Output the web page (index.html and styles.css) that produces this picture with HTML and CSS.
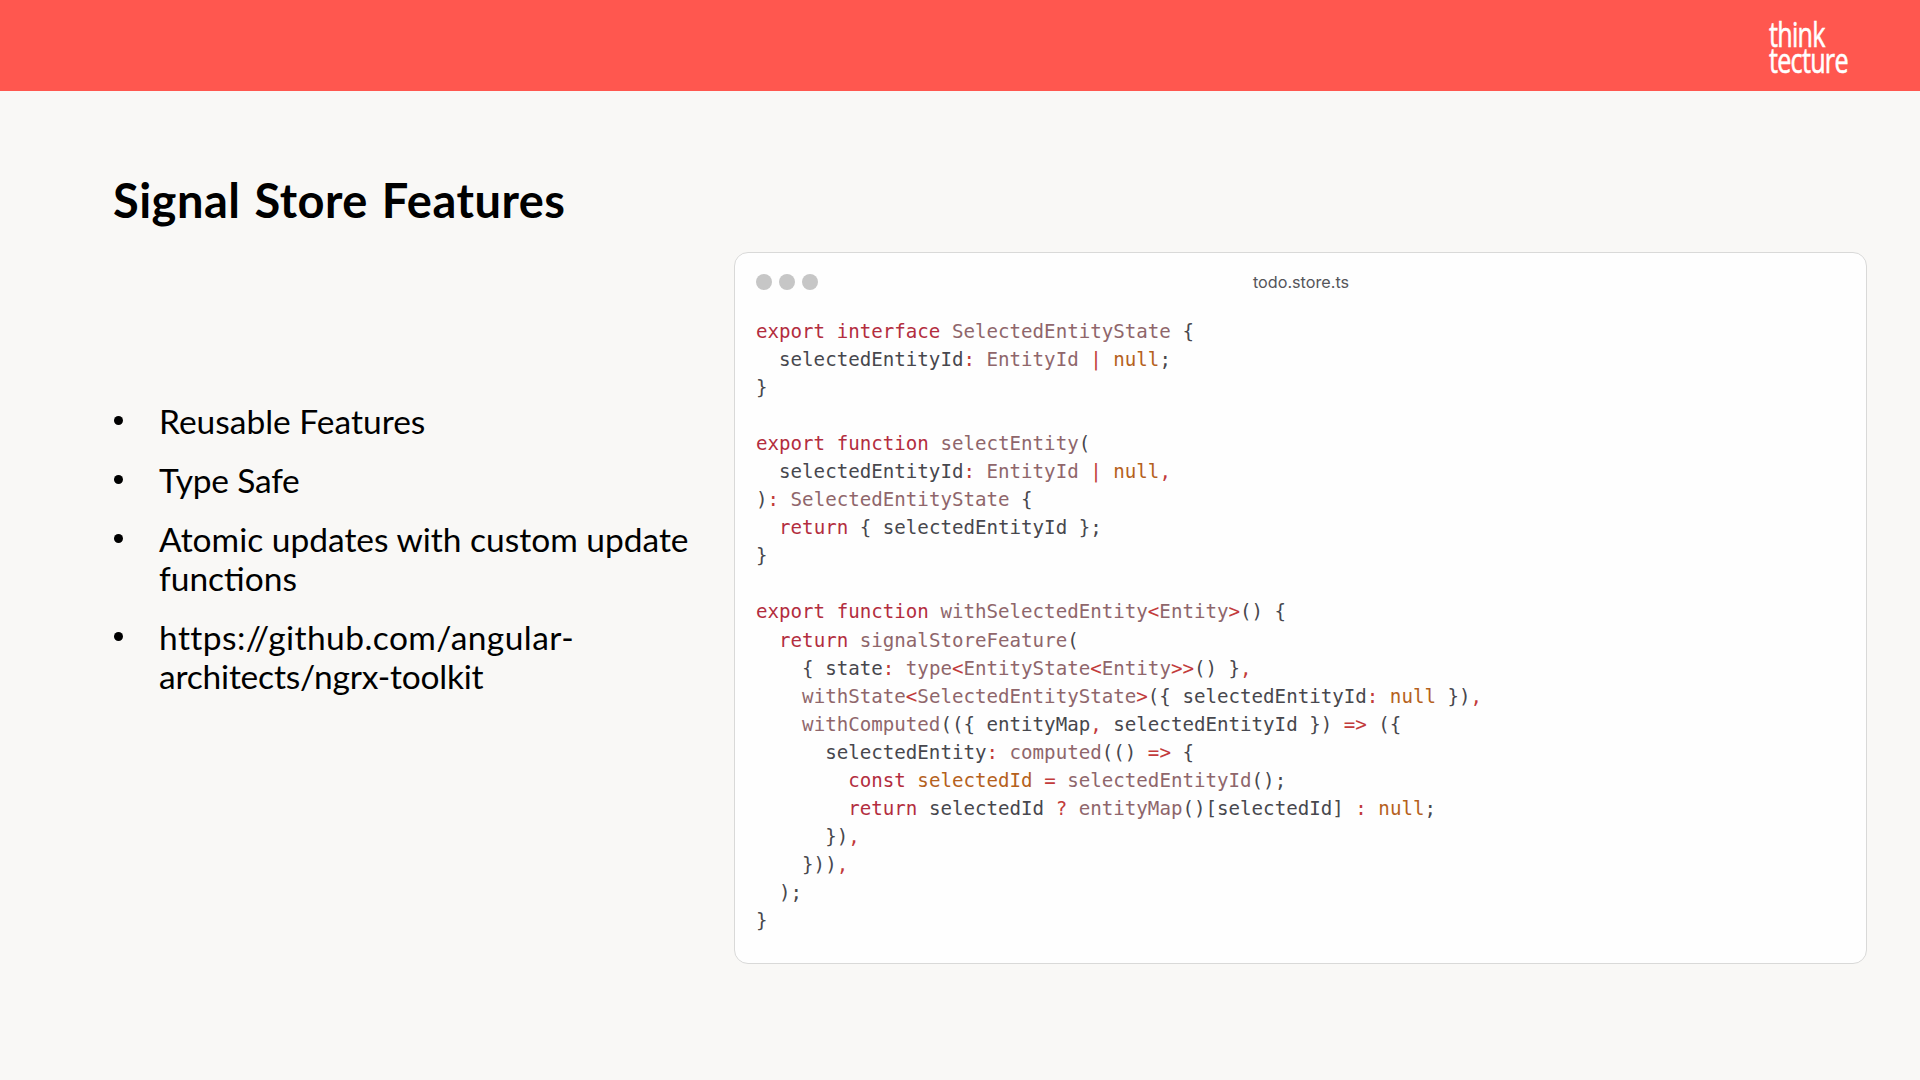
FILE: index.html
```html
<!DOCTYPE html>
<html lang="en">
<head>
<meta charset="utf-8">
<title>Signal Store Features</title>
<link rel="stylesheet" href="styles.css">
</head>
<body>
<header class="banner">
  <div class="logo"><span>think</span><span>tecture</span></div>
</header>
<main class="slide">
  <h1 class="title">Signal Store Features</h1>
  <div class="content">
    <ul class="points">
      <li>Reusable Features</li>
      <li class="tight">Type Safe</li>
      <li>Atomic updates with custom update functions</li>
      <li><span class="url">https://github.com/angular-</span><br><span class="tight">architects/ngrx-toolkit</span></li>
    </ul>
    <section class="window">
      <div class="bar">
        <div class="dots"><i></i><i></i><i></i></div>
        <div class="file">todo.store.ts</div>
      </div>
<pre class="code"><b>export interface</b> <u>SelectedEntityState</u> {
  selectedEntityId<s>:</s> <u>EntityId</u> <s>|</s> <em>null</em>;
}

<b>export function</b> <u>selectEntity</u>(
  selectedEntityId<s>:</s> <u>EntityId</u> <s>|</s> <em>null</em><s>,</s>
)<s>:</s> <u>SelectedEntityState</u> {
  <b>return</b> { selectedEntityId };
}

<b>export function</b> <u>withSelectedEntity</u><s>&lt;</s><u>Entity</u><s>&gt;</s>() {
  <b>return</b> <u>signalStoreFeature</u>(
    { state<s>:</s> <u>type</u><s>&lt;</s><u>EntityState</u><s>&lt;</s><u>Entity</u><s>&gt;&gt;</s>() }<s>,</s>
    <u>withState</u><s>&lt;</s><u>SelectedEntityState</u><s>&gt;</s>({ selectedEntityId<s>:</s> <em>null</em> })<s>,</s>
    <u>withComputed</u>(({ entityMap<s>,</s> selectedEntityId }) <s>=&gt;</s> ({
      selectedEntity<s>:</s> <u>computed</u>(() <s>=&gt;</s> {
        <b>const</b> <em>selectedId</em> <s>=</s> <u>selectedEntityId</u>();
        <b>return</b> selectedId <s>?</s> <u>entityMap</u>()[selectedId] <s>:</s> <em>null</em>;
      })<s>,</s>
    }))<s>,</s>
  );
}</pre>
    </section>
  </div>
</main>
</body>
</html>
```
FILE: styles.css
```css
* { box-sizing: border-box; }
html, body { margin: 0; height: 100%; }
body {
  width: 1920px;
  height: 1080px;
  overflow: hidden;
  background: #f9f8f6;
  color: #000;
  font-family: "Lato", "Open Sans", sans-serif;
  display: flex;
  flex-direction: column;
}
.banner {
  height: 91px;
  flex: none;
  background: #ff574f;
  display: flex;
  justify-content: flex-end;
  padding: 21px 72px 0 0;
}
.logo {
  width: 79px;
  display: flex;
  flex-direction: column;
  color: #fff;
  font-family: "Open Sans", sans-serif;
  font-size: 34px;
  line-height: 26px;
  letter-spacing: -1px;
  -webkit-text-stroke: 0.6px #fff;
  transform: scaleX(0.74);
  transform-origin: left top;
}
.slide {
  flex: 1;
  padding: 0 54px 0 113px;
  display: flex;
  flex-direction: column;
}
.title {
  margin: 80px 0 0;
  font-size: 47px;
  line-height: 58px;
  font-weight: 700;
  letter-spacing: 0.5px;
  word-spacing: 2px;
}
.content {
  display: flex;
  align-items: flex-start;
  margin-top: 23px;
}
.points {
  width: 621px;
  flex: none;
  margin: 0;
  padding: 0 40px 0 46px;
  margin-top: 150px;
  list-style: none;
  font-size: 33.5px;
  line-height: 39px;
}
.points li { position: relative; margin-bottom: 20px; }
.points li::before {
  content: "";
  position: absolute;
  left: -45px;
  top: 14px;
  width: 9px;
  height: 9px;
  border-radius: 50%;
  background: #000;
}
.points .tight { letter-spacing: -0.2px; }
.points .url { letter-spacing: 0.45px; }
.window {
  width: 1133px;
  height: 712px;
  flex: none;
  background: #fefefe;
  border: 1px solid #d9d9d8;
  border-radius: 14px;
  padding: 21px 20px 0 21px;
}
.bar {
  position: relative;
  height: 16px;
  display: flex;
  justify-content: center;
  align-items: center;
}
.dots {
  position: absolute;
  left: 0;
  top: 0;
  display: flex;
  gap: 7px;
}
.dots i {
  width: 16px;
  height: 16px;
  border-radius: 50%;
  background: #c6c6c6;
}
.file {
  font-family: "Inter", sans-serif;
  font-size: 16.2px;
  color: #55555a;
}
.code {
  margin: 28px 0 0;
  font-family: "DejaVu Sans Mono", monospace;
  font-size: 19.15px;
  line-height: 28.04px;
  color: #47474d;
}
.code b { font-weight: 400; color: #b32d3e; }
.code u { text-decoration: none; color: #8f666b; }
.code s { text-decoration: none; color: #c23b3b; }
.code em { font-style: normal; color: #b5611c; }
```
